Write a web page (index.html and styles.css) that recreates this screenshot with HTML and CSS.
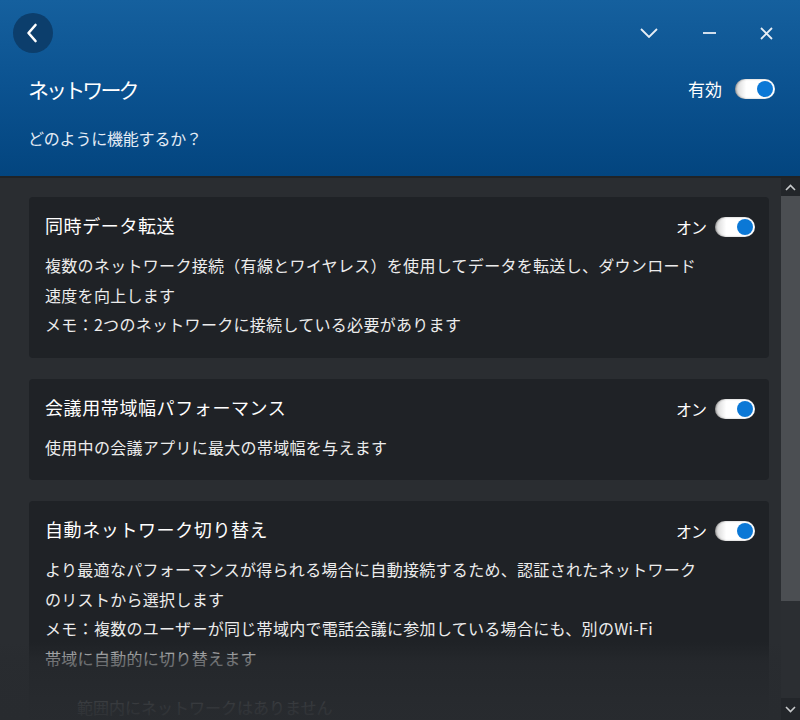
FILE: index.html
```html
<!DOCTYPE html>
<html lang="ja">
<head>
<meta charset="utf-8">
<title>ネットワーク</title>
<link rel="stylesheet" href="styles.css">
</head>
<body>
<div class="app">
  <header class="header">
    <div class="top-row">
      <button class="back" aria-label="戻る">
        <svg width="12" height="20" viewBox="0 0 12 20"><path d="M9.5 2 L2.5 10 L9.5 18" fill="none" stroke="#fff" stroke-width="2.6" stroke-linecap="round" stroke-linejoin="round"/></svg>
      </button>
      <div class="controls">
        <svg class="ctl-chev" width="18" height="10" viewBox="0 0 18 10"><path d="M1 1 L9 9 L17 1" fill="none" stroke="#e8eef5" stroke-width="1.8"/></svg>
        <svg class="ctl-min" width="13" height="4" viewBox="0 0 13 4"><path d="M0 2 H13" stroke="#e8eef5" stroke-width="1.8"/></svg>
        <svg class="ctl-x" width="13" height="13" viewBox="0 0 13 13"><path d="M1 1 L12 12 M12 1 L1 12" stroke="#e8eef5" stroke-width="1.8"/></svg>
      </div>
    </div>
    <div class="title-row">
      <h1 class="title">ネットワーク</h1>
      <div class="switch-group">
        <span class="switch-label header-label">有効</span>
        <span class="toggle"><span class="knob"></span></span>
      </div>
    </div>
    <p class="subtitle">どのように機能するか？</p>
  </header>
  <div class="main">
    <div class="content">
      <section class="card">
        <div class="card-head">
          <h2 class="card-title">同時データ転送</h2>
          <div class="switch-group">
            <span class="switch-label">オン</span>
            <span class="toggle"><span class="knob"></span></span>
          </div>
        </div>
        <p class="desc">複数のネットワーク接続（有線とワイヤレス）を使用してデータを転送し、ダウンロード<br>速度を向上します<br>メモ：2つのネットワークに接続している必要があります</p>
      </section>
      <section class="card">
        <div class="card-head">
          <h2 class="card-title">会議用帯域幅パフォーマンス</h2>
          <div class="switch-group">
            <span class="switch-label">オン</span>
            <span class="toggle"><span class="knob"></span></span>
          </div>
        </div>
        <p class="desc">使用中の会議アプリに最大の帯域幅を与えます</p>
      </section>
      <section class="card">
        <div class="card-head">
          <h2 class="card-title">自動ネットワーク切り替え</h2>
          <div class="switch-group">
            <span class="switch-label">オン</span>
            <span class="toggle"><span class="knob"></span></span>
          </div>
        </div>
        <p class="desc">より最適なパフォーマンスが得られる場合に自動接続するため、認証されたネットワーク<br>のリストから選択します<br>メモ：複数のユーザーが同じ帯域内で電話会議に参加している場合にも、別のWi-Fi<br>帯域に自動的に切り替えます</p>
        <p class="empty">範囲内にネットワークはありません</p>
      </section>
      <div class="fade"></div>
    </div>
    <div class="scrollbar">
      <div class="sb-btn">
        <svg width="11" height="7" viewBox="0 0 11 7"><path d="M1 6 L5.5 1.5 L10 6" fill="none" stroke="#c8cacc" stroke-width="1.6"/></svg>
      </div>
      <div class="sb-thumb"></div>
      <div class="sb-track"></div>
      <div class="sb-btn sb-bottom">
        <svg width="11" height="7" viewBox="0 0 11 7"><path d="M1 1 L5.5 5.5 L10 1" fill="none" stroke="#c8cacc" stroke-width="1.6"/></svg>
      </div>
    </div>
  </div>
</div>
</body>
</html>
```

FILE: styles.css
```css
* { box-sizing: border-box; }
html, body { margin: 0; padding: 0; }
body {
  width: 800px;
  height: 720px;
  overflow: hidden;
  background: #2a2d31;
  font-family: "Noto Sans CJK JP", "Noto Sans", sans-serif;
  color: #e8e8e8;
}
.app {
  display: flex;
  flex-direction: column;
  height: 720px;
}
.header {
  position: relative;
  z-index: 2;
  height: 178px;
  flex: none;
  background: linear-gradient(to bottom, #15609e 0%, #0b5290 50%, #03457f 100%);
  border-bottom: 2px solid #202326;
}
.top-row {
  display: flex;
  justify-content: space-between;
  align-items: center;
  padding: 13px 27px 0 13px;
}
.back {
  width: 40px;
  height: 40px;
  border-radius: 50%;
  border: none;
  padding: 0;
  background: #0c3e6c;
  display: flex;
  align-items: center;
  justify-content: center;
}
.back svg { margin-left: -2px; }
.controls {
  display: flex;
  align-items: center;
}
.ctl-min { margin-left: 45px; }
.ctl-x { margin-left: 44px; }
.title-row {
  display: flex;
  justify-content: space-between;
  align-items: center;
  height: 30px;
  margin-top: 21px;
  padding: 0 25px 0 28px;
}
.title {
  margin: 0;
  font-size: 21px;
  font-weight: 400;
  letter-spacing: -2.9px;
  color: #ffffff;
  line-height: 30px;
}
.subtitle {
  margin: 22px 0 0 28px;
  font-size: 16px;
  line-height: 24px;
  letter-spacing: -0.2px;
  color: #e4ecf5;
}
.switch-group {
  display: flex;
  align-items: center;
}
.switch-label {
  font-size: 16px;
  line-height: 22px;
  color: #ffffff;
  margin-right: 9px;
  letter-spacing: -1px;
}
.header-label {
  font-size: 17px;
  margin-right: 13px;
  letter-spacing: 0;
}
.toggle {
  position: relative;
  display: block;
  width: 40px;
  height: 20px;
  border-radius: 10px;
  background: linear-gradient(to right, #d2d2d2 0%, #ffffff 28%, #ffffff 100%);
  box-shadow: inset 1px 0 2px rgba(0, 0, 0, 0.35);
}
.knob {
  position: absolute;
  right: 2px;
  top: 2px;
  width: 16px;
  height: 16px;
  border-radius: 50%;
  background: #0b78d6;
}
.main {
  flex: 1;
  display: flex;
  min-height: 0;
}
.content {
  position: relative;
  flex: 1;
  overflow: hidden;
  padding: 19px 12px 0 29px;
  display: flex;
  flex-direction: column;
  gap: 21px;
}
.card {
  flex: none;
  background: #1f2226;
  border-radius: 4px;
  padding: 14px 14px 18px 16px;
}
.card-head {
  display: flex;
  justify-content: space-between;
  align-items: center;
  height: 28px;
}
.card-head .switch-group { margin-top: 4px; }
.card-title {
  margin: 0;
  font-size: 18px;
  font-weight: 400;
  line-height: 28px;
  letter-spacing: 0.6px;
  color: #ffffff;
}
.desc {
  margin: 12px 0 0;
  font-size: 16px;
  line-height: 29.5px;
  letter-spacing: 0.3px;
  color: #ececec;
}
.empty {
  margin: 20px 0 0 32px;
  font-size: 16px;
  line-height: 29px;
  color: #e8e8e8;
}
.fade {
  position: absolute;
  left: 0;
  right: 0;
  bottom: 0;
  height: 78px;
  background: linear-gradient(to bottom, rgba(40, 43, 47, 0) 0%, rgba(40, 43, 47, 0.62) 24%, rgba(40, 43, 47, 0.94) 83%, rgba(40, 43, 47, 0.97) 100%);
  pointer-events: none;
}
.scrollbar {
  width: 19px;
  flex: none;
  display: flex;
  flex-direction: column;
  background: #2b2e32;
}
.sb-btn {
  height: 18px;
  flex: none;
  display: flex;
  align-items: center;
  justify-content: center;
  background: #23262a;
}
.sb-thumb {
  height: 405px;
  flex: none;
  background: #4b4e52;
}
.sb-track { flex: 1; }
.sb-bottom { height: 22px; }
```
